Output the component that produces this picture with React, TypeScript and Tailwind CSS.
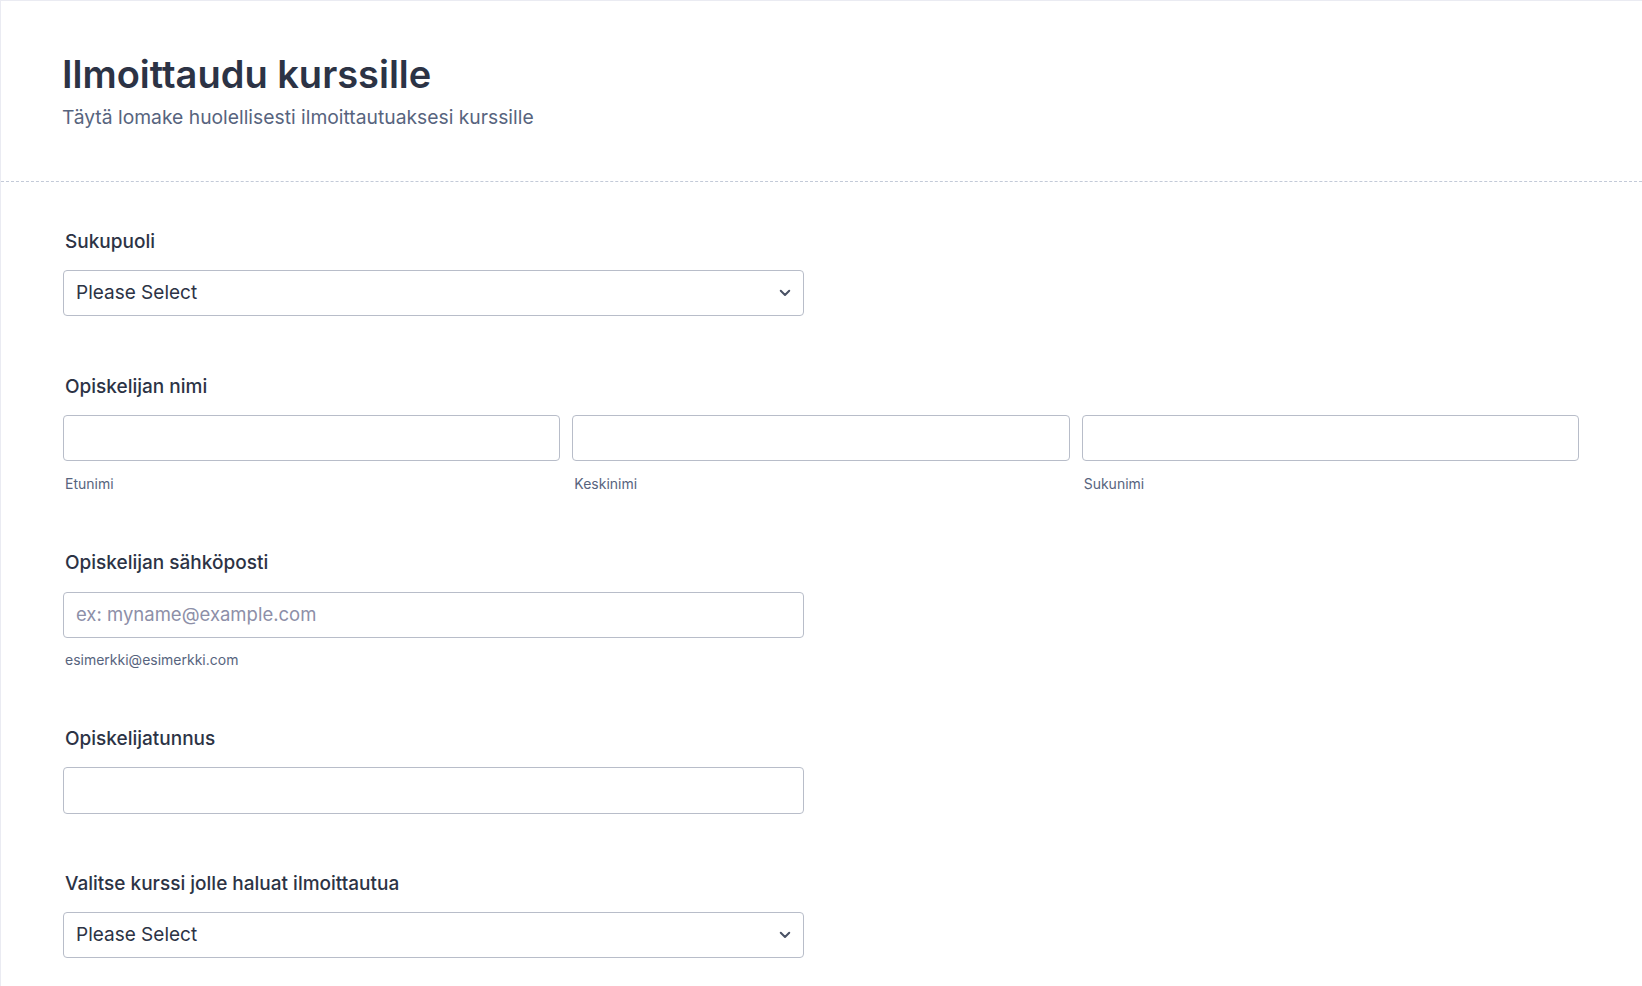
import React from "react";

function Chevron() {
  return (
    <svg width="12" height="8" viewBox="0 0 12 8" fill="none" className="pointer-events-none absolute right-[12px] top-1/2 -translate-y-1/2">
      <path d="M1.75 1.75L6 6L10.25 1.75" stroke="#4a5265" strokeWidth="2" strokeLinecap="round" strokeLinejoin="round" />
    </svg>
  );
}

function SelectBox() {
  return (
    <div className="relative w-[741px] h-[46px] rounded-[4px] border border-[#b8bdc9] bg-white flex items-center pl-[12px]">
      <span className="text-[19px] text-[#2c3345]">Please Select</span>
      <Chevron />
    </div>
  );
}

function Label({ children }: { children: React.ReactNode }) {
  return <div className="text-[19px] font-medium text-[#2c3345] leading-[20px] pl-[2px]">{children}</div>;
}

export default function App() {
  return (
    <div className="w-[1642px] h-[986px] bg-white overflow-hidden" style={{ fontFamily: "Inter, 'Noto Sans', sans-serif" }}>
      <div className="border-l border-t border-[#eaebf2] h-full">
        <div className="pl-[61px] pt-[50px] h-[181px] border-b border-dashed border-[#c3cad8]">
          <h1 className="text-[38px] font-semibold text-[#2c3345] leading-[46px]">Ilmoittaudu kurssille</h1>
          <p className="mt-[8px] text-[19.3px] text-[#57647e] leading-[24px]">Täytä lomake huolellisesti ilmoittautuaksesi kurssille</p>
        </div>
        <div className="pl-[62px] pr-[63px]">
          <div className="pt-[50px]">
            <Label>Sukupuoli</Label>
            <div className="mt-[18px]"><SelectBox /></div>
          </div>
          <div className="pt-[61px]">
            <Label>Opiskelijan nimi</Label>
            <div className="mt-[18px] grid grid-cols-3 gap-[12px]">
              {["Etunimi", "Keskinimi", "Sukunimi"].map((s) => (
                <div key={s}>
                  <div className="h-[46px] rounded-[4px] border border-[#b8bdc9] bg-white" />
                  <div className="mt-[15px] pl-[2px] text-[14px] text-[#57647e] leading-[16px]">{s}</div>
                </div>
              ))}
            </div>
          </div>
          <div className="pt-[61px]">
            <Label>Opiskelijan sähköposti</Label>
            <div className="mt-[19px] w-[741px] h-[46px] rounded-[4px] border border-[#b8bdc9] bg-white flex items-center pl-[12px]">
              <span className="text-[18.5px] text-[#8d8fa8]">ex: myname@example.com</span>
            </div>
            <div className="mt-[14px] pl-[2px] text-[14px] text-[#57647e] leading-[16px]">esimerkki@esimerkki.com</div>
          </div>
          <div className="pt-[61px]">
            <Label>Opiskelijatunnus</Label>
            <div className="mt-[18px] w-[741px] h-[47px] rounded-[4px] border border-[#b8bdc9] bg-white" />
          </div>
          <div className="pt-[60px]">
            <Label>Valitse kurssi jolle haluat ilmoittautua</Label>
            <div className="mt-[18px]"><SelectBox /></div>
          </div>
        </div>
      </div>
    </div>
  );
}
